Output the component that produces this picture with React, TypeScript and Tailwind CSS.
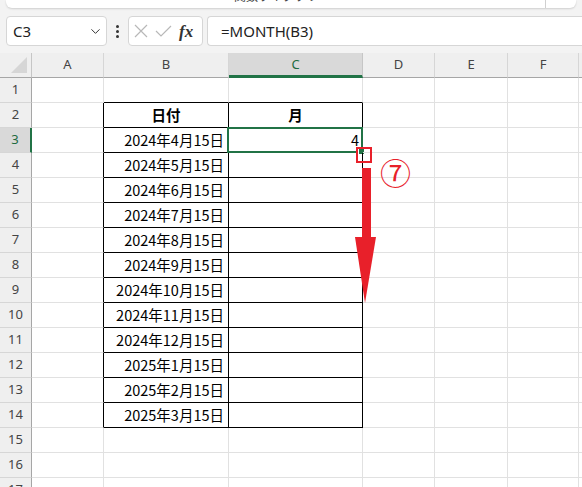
import React from 'react'
import { ChevronDown } from 'lucide-react'

const cols = ['A', 'B', 'C', 'D', 'E', 'F', 'G']
const widths: Record<string, string> = {
  A: 'w-[72px]',
  B: 'w-[125px]',
  C: 'w-[134px]',
  D: 'w-[72px]',
  E: 'w-[73px]',
  F: 'w-[71px]',
  G: 'w-[72px]',
}

const dates = [
  '2024年4月15日',
  '2024年5月15日',
  '2024年6月15日',
  '2024年7月15日',
  '2024年8月15日',
  '2024年9月15日',
  '2024年10月15日',
  '2024年11月15日',
  '2024年12月15日',
  '2025年1月15日',
  '2025年2月15日',
  '2025年3月15日',
]

const rows = Array.from({ length: 17 }, (_, i) => i + 1)

const cellClass = (col: string, row: number) => {
  const inTable = row >= 2 && row <= 14
  let cls = 'relative h-full shrink-0 border-r border-b border-[#e1e1e1] ' + widths[col]
  if ((col === 'B' || col === 'C') && inTable) cls += ' border-r-black border-b-black'
  if ((col === 'B' || col === 'C') && row === 1) cls += ' border-b-black'
  if (col === 'A' && inTable) cls += ' border-r-black'
  return cls
}

const Cell = ({ col, row }: { col: string; row: number }) => {
  let content: React.ReactNode = null
  if (row === 2 && col === 'B') content = <div className="flex h-full items-center justify-center font-bold">日付</div>
  if (row === 2 && col === 'C') content = <div className="flex h-full items-center justify-center font-bold">月</div>
  if (row >= 3 && row <= 14 && col === 'B')
    content = <div className="flex h-full items-center justify-end pr-[4px]">{dates[row - 3]}</div>
  if (row === 3 && col === 'C')
    content = (
      <>
        <div className="flex h-full items-center justify-end pr-[3px]">4</div>
        <div className="absolute -left-[2px] -top-[1px] -right-px -bottom-px border-2 border-[#217346]">
          <div className="absolute -right-[4px] -bottom-[4px] h-[7px] w-[7px] border border-white bg-[#217346]" />
        </div>
      </>
    )
  return <div className={cellClass(col, row)}>{content}</div>
}

export default function App() {
  return (
    <div
      className="relative h-[487px] w-[582px] overflow-hidden bg-[#f3f3f3] text-[14.5px] text-black"
      style={{ fontFamily: '"Noto Sans CJK JP", "Noto Sans", sans-serif' }}
    >
      {/* ribbon bottom edge */}
      <div className="mx-[6px] flex h-[8px] justify-center overflow-hidden rounded-b-[6px] bg-white shadow-[0_1px_2px_rgba(0,0,0,0.15)]">
        <div className="flex-1" />
        <span className="-mt-[12px] text-[12px] leading-[16px] text-[#444]">関数ライブラリ</span>
        <div className="flex flex-1 justify-end pr-[30px]">
          <div className="w-px bg-[#d0d0d0]" />
        </div>
      </div>

      {/* formula bar */}
      <div className="mt-[8px] flex h-[30px] items-center">
        <div className="ml-[6px] flex h-full w-[101px] items-center justify-between rounded-[4px] border border-[#d6d6d6] bg-white pl-[6px] pr-[3px]">
          <span className="text-[15px] text-[#222]" style={{ fontFamily: '"Noto Sans", sans-serif' }}>C3</span>
          <ChevronDown size={15} strokeWidth={1.6} className="text-[#333]" />
        </div>
        <div className="flex w-[21px] flex-col items-center gap-[2px]">
          <span className="h-[3px] w-[3px] rounded-full bg-[#333]" />
          <span className="h-[3px] w-[3px] rounded-full bg-[#333]" />
          <span className="h-[3px] w-[3px] rounded-full bg-[#333]" />
        </div>
        <div className="flex h-full w-[75px] items-center gap-[7px] rounded-[4px] border border-[#d6d6d6] bg-white pl-[5px]">
          <svg width="14" height="14" viewBox="0 0 14 14" className="text-[#b8b8b8]">
            <path d="M1 1L13 13M13 1L1 13" stroke="currentColor" strokeWidth="1.2" fill="none" />
          </svg>
          <svg width="17" height="14" viewBox="0 0 17 14" className="text-[#b8b8b8]">
            <path d="M1 7L6 12L16 2" stroke="currentColor" strokeWidth="1.2" fill="none" />
          </svg>
          <span
            className="text-[17px] font-bold italic leading-none text-[#333]"
            style={{ fontFamily: '"Liberation Serif", serif' }}
          >
            fx
          </span>
        </div>
        <div className="ml-[4px] flex h-full flex-1 items-center rounded-l-[4px] border border-r-0 border-[#d6d6d6] bg-white pl-[13px]">
          <span className="text-[15px] text-[#222]" style={{ fontFamily: '"Noto Sans", sans-serif' }}>
            =MONTH(B3)
          </span>
        </div>
      </div>

      {/* sheet */}
      <div className="mt-[7px] w-max bg-white">
        <div className="flex h-[25px] bg-[#efefef] text-[13px] text-[#444]" style={{ fontFamily: '"Noto Sans", sans-serif' }}>
          <div className="relative h-full w-[32px] shrink-0 border-r border-b border-r-[#c6c6c6] border-b-[#a6a6a6]">
            <svg width="16" height="16" viewBox="0 0 16 16" className="absolute bottom-[4px] right-[4px]">
              <polygon points="16,0 16,16 0,16" fill="#d6d6d6" />
            </svg>
          </div>
          {cols.map((c) =>
            c === 'C' ? (
              <div
                key={c}
                className={'flex h-full shrink-0 items-center justify-center border-r border-b-[3px] border-r-[#c6c6c6] border-b-[#217346] bg-[#d9d9d9] pt-[1px] text-[#1e6b41] ' + widths[c]}
              >
                {c}
              </div>
            ) : (
              <div
                key={c}
                className={'flex h-full shrink-0 items-center justify-center border-r border-b border-r-[#d6d6d6] border-b-[#a6a6a6] ' + widths[c]}
              >
                {c}
              </div>
            )
          )}
        </div>
        {rows.map((r) => (
          <div key={r} className="flex h-[25px]">
            {r === 3 ? (
              <div
                className="flex h-full w-[32px] shrink-0 items-center justify-center border-r-2 border-b border-r-[#217346] border-b-[#d6d6d6] bg-[#d9d9d9] text-[13px] text-[#1e6b41]"
                style={{ fontFamily: '"Noto Sans", sans-serif' }}
              >
                {r}
              </div>
            ) : (
              <div
                className="flex h-full w-[32px] shrink-0 items-center justify-center border-r border-b border-r-[#a6a6a6] border-b-[#d6d6d6] bg-[#efefef] text-[13px] text-[#444]"
                style={{ fontFamily: '"Noto Sans", sans-serif' }}
              >
                {r}
              </div>
            )}
            {cols.map((c) => (
              <Cell key={c} col={c} row={r} />
            ))}
          </div>
        ))}
      </div>

      {/* annotations */}
      <div className="absolute left-[356px] top-[147px] h-[16px] w-[16px] border-2 border-[#e8202a]" />
      <svg width="22" height="136" viewBox="0 0 22 136" className="absolute left-[354px] top-[168px]">
        <rect x="8" y="0" width="9" height="70" fill="#e8202a" />
        <polygon points="1,69 22,69 11,135" fill="#e8202a" />
      </svg>
      <span className="absolute left-[380px] top-[156px] text-[31px] leading-none text-[#e8202a]">⑦</span>
    </div>
  )
}
